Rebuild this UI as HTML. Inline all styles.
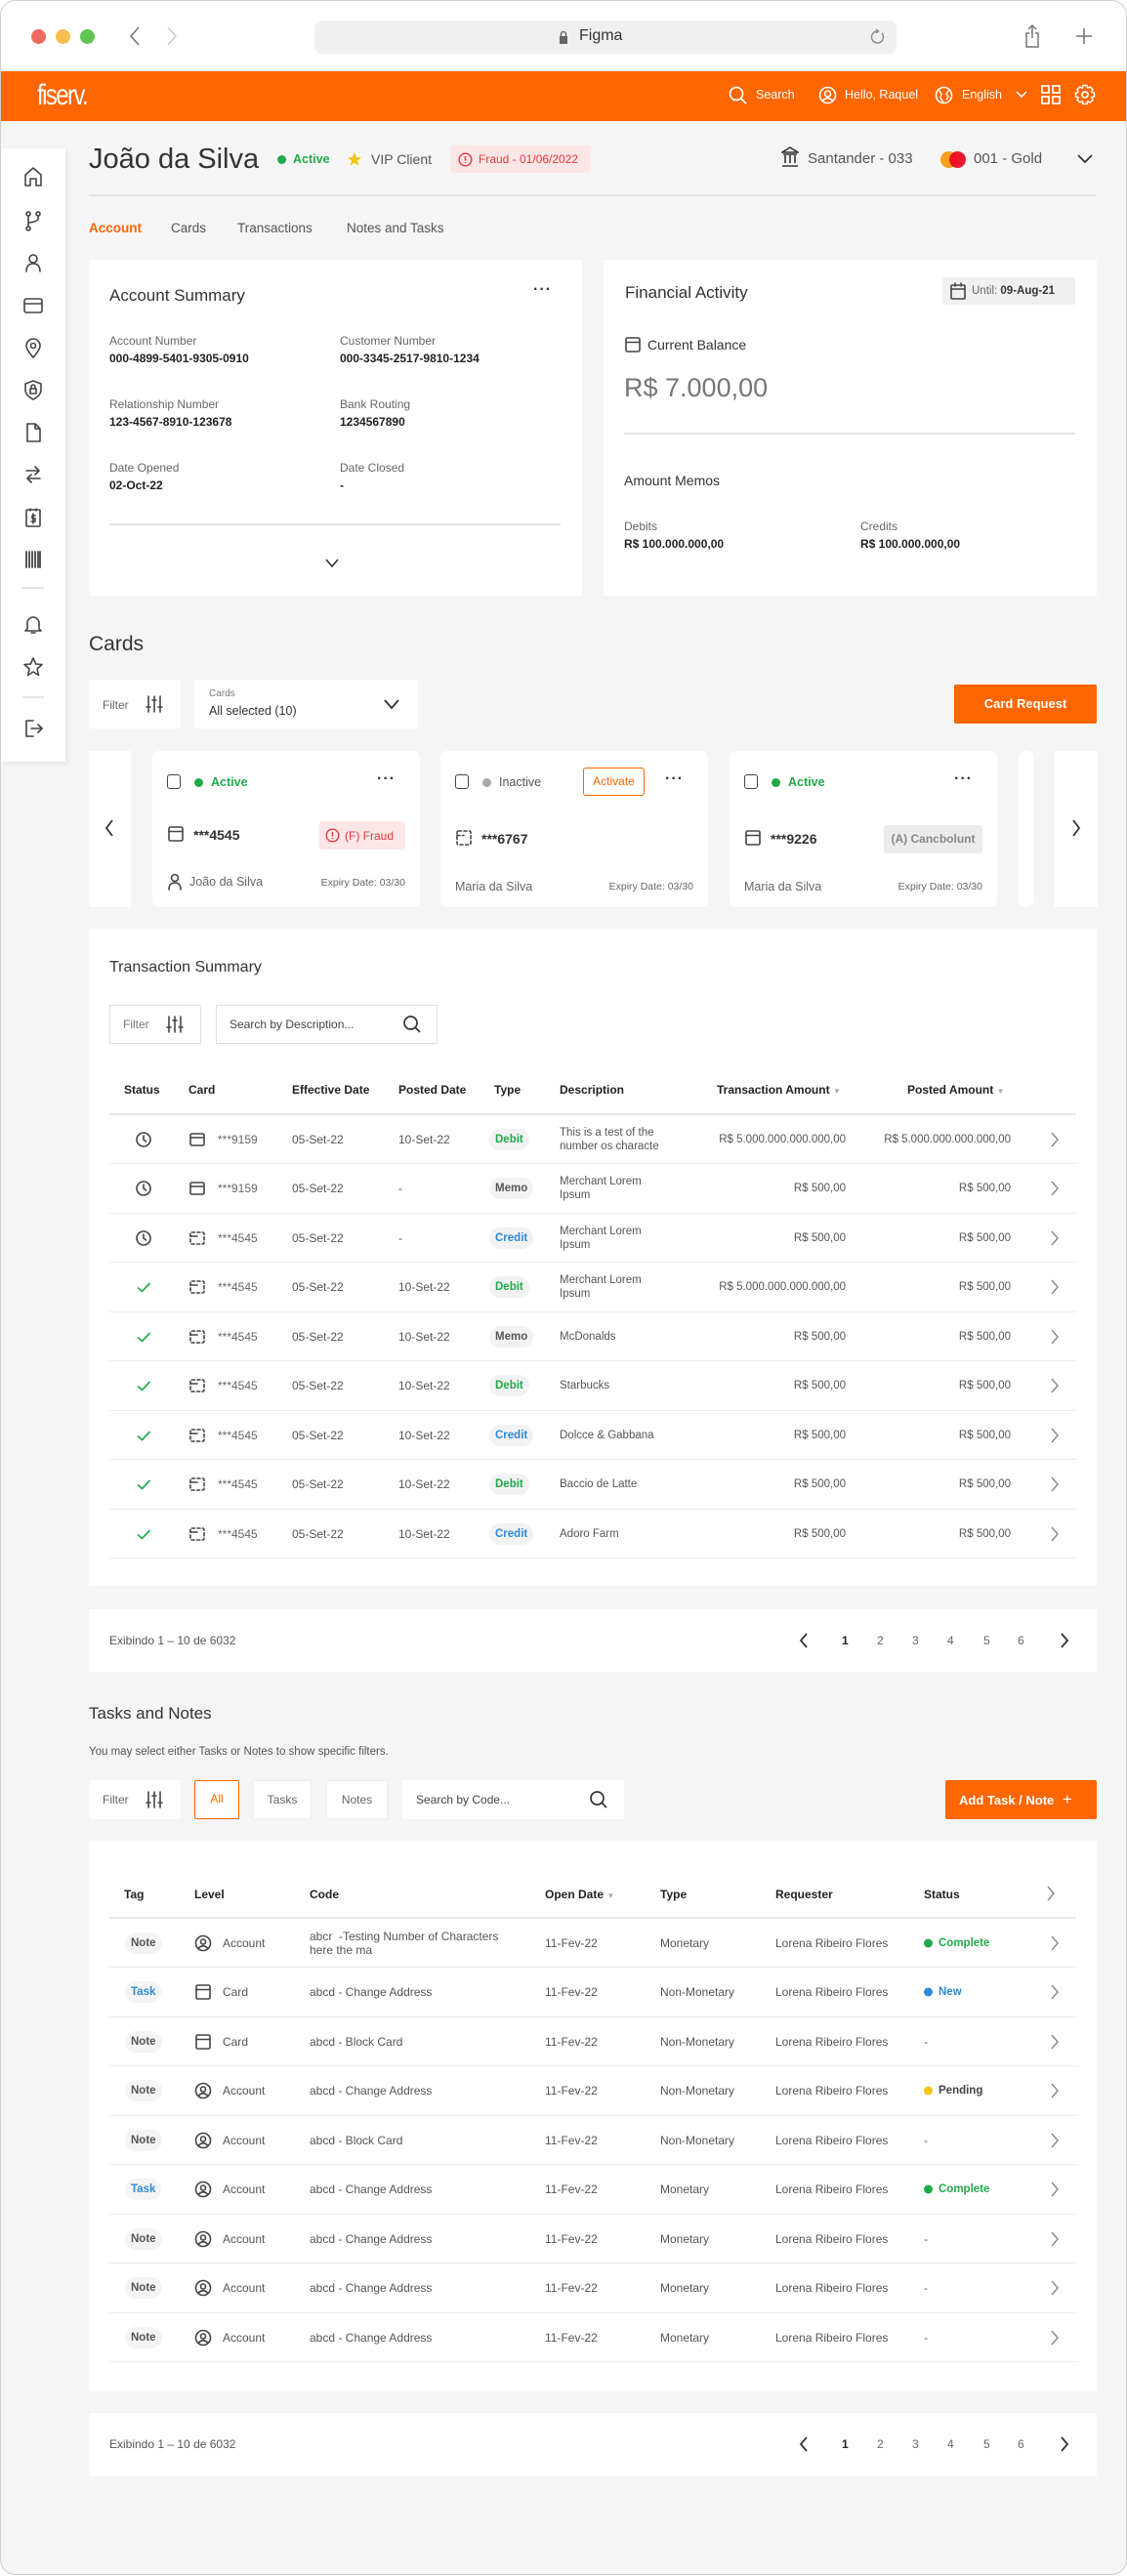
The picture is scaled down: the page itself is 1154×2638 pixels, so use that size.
<!DOCTYPE html>
<html><head><meta charset="utf-8">
<style>
*{box-sizing:border-box;margin:0;padding:0}
body{width:1154px;height:2638px;background:#fff;font-family:"Liberation Sans",Arial,sans-serif;color:#333;position:relative;overflow:hidden}
.a{position:absolute}
.win{position:absolute;left:0;top:0;width:1154px;height:2637px;border:1.5px solid #d0d0d0;border-radius:16px;overflow:hidden;background:#f5f5f5}
.chrome{position:absolute;left:0;top:0;width:1154px;height:72px;background:#fff;border-bottom:1px solid #ddd}
.hdr{position:absolute;left:0;top:72px;width:1154px;height:51px;background:#ff6600}
.panel{position:absolute;background:#fff}
.lbl{font-size:12px;color:#666}
.val{font-size:12px;color:#222;font-weight:bold}
.t{font-size:12px;color:#555;white-space:nowrap}
.h{font-size:12px;color:#222;font-weight:bold;white-space:nowrap}
.row{position:absolute;left:21px;width:990px;height:50px;border-bottom:1.5px solid #ececec}
.row>*{position:absolute;top:50%;transform:translateY(-50%)}
.bd{font-size:11.5px;font-weight:bold;padding:5px 6px;border-radius:12px;background:#f2f2f2}
.g{color:#23a94b}.bl{color:#2e8ad8}.gr{color:#555}
.box{position:absolute;background:#fff;border:1.5px solid #e0e0e0}
svg{display:block}
.ic{stroke:#444;fill:none;stroke-width:1.6;stroke-linecap:round;stroke-linejoin:round}
.card{position:absolute;top:768px;width:274px;height:160px;background:#fff;border-radius:7px}
.card>*{position:absolute}
.cb{width:14px;height:15px;border:1.6px solid #444;border-radius:3px}
.dot{width:9px;height:9px;border-radius:50%}
</style></head><body>
<div class="win">
<div class="chrome">
 <div class="a" style="left:31px;top:29px;width:15px;height:15px;border-radius:50%;background:#ec6a5e"></div>
 <div class="a" style="left:56px;top:29px;width:15px;height:15px;border-radius:50%;background:#f4bf4f"></div>
 <div class="a" style="left:81px;top:29px;width:15px;height:15px;border-radius:50%;background:#61c554"></div>
 <svg class="a" style="left:130px;top:25px" width="14" height="22"><path d="M11 2 L3 11 L11 20" stroke="#777" stroke-width="1.6" fill="none"/></svg>
 <svg class="a" style="left:168px;top:25px" width="14" height="22"><path d="M3 2 L11 11 L3 20" stroke="#ccc" stroke-width="1.6" fill="none"/></svg>
 <div class="a" style="left:321px;top:20px;width:596px;height:34px;border-radius:8px;background:#f0f0f0"></div>
 <svg class="a" style="left:571px;top:30px" width="10" height="15"><rect x="1" y="6" width="8" height="8" fill="#666"/><path d="M2.5 6 V4 a2.5 2.5 0 0 1 5 0 V6" stroke="#666" fill="none" stroke-width="1.4"/></svg>
 <div class="a" style="left:592px;top:27px;font-size:16px;color:#333">Figma</div>
 <svg class="a" style="left:889px;top:28px" width="16" height="18"><path d="M13 5 A6 6 0 1 1 8 3" stroke="#888" fill="none" stroke-width="1.4"/><path d="M7 1 L9.5 3 L7 5" stroke="#888" fill="none" stroke-width="1.4"/></svg>
 <svg class="a" style="left:1048px;top:23px" width="16" height="26"><path d="M8 2 V15 M4 6 L8 2 L12 6 M5 10 H2 V24 H14 V10 H11" stroke="#777" fill="none" stroke-width="1.5"/></svg>
 <svg class="a" style="left:1101px;top:28px" width="16" height="16"><path d="M8 0 V16 M0 8 H16" stroke="#777" stroke-width="1.6"/></svg>
</div>
<div class="hdr">
 <div class="a" style="left:37px;top:8px;font-size:30px;color:#fff;letter-spacing:-2px;transform:scaleX(.8);transform-origin:left;font-family:'Liberation Sans Narrow','Liberation Sans',sans-serif">fiserv.</div>
 <svg class="a" style="left:745px;top:15px" width="20" height="20"><circle cx="8" cy="8" r="6.5" stroke="#fff" fill="none" stroke-width="1.7"/><path d="M13 13 L18 18" stroke="#fff" stroke-width="1.7"/></svg>
 <div class="a" style="left:773px;top:17px;font-size:12.5px;color:#fff">Search</div>
 <svg class="a" style="left:837px;top:15px" width="19" height="19"><circle cx="9.5" cy="9.5" r="8" stroke="#fff" fill="none" stroke-width="1.6"/><circle cx="9.5" cy="8" r="3" stroke="#fff" fill="none" stroke-width="1.6"/><path d="M4.5 15 Q9.5 10 14.5 15" stroke="#fff" fill="none" stroke-width="1.6"/></svg>
 <div class="a" style="left:864px;top:17px;font-size:12.5px;color:#fff">Hello, Raquel</div>
 <svg class="a" style="left:956px;top:15px" width="19" height="19"><circle cx="9.5" cy="9.5" r="8" stroke="#fff" fill="none" stroke-width="1.6"/><path d="M4 4 L7 8 L6 12 L9 17 M15 4 L12 8 L14 11 L12 14" stroke="#fff" fill="none" stroke-width="1.4"/></svg>
 <div class="a" style="left:984px;top:17px;font-size:12.5px;color:#fff">English</div>
 <svg class="a" style="left:1039px;top:19px" width="12" height="10"><path d="M1 2 L6 7 L11 2" stroke="#fff" fill="none" stroke-width="1.5"/></svg>
 <svg class="a" style="left:1065px;top:14px" width="20" height="20"><g stroke="#fff" fill="none" stroke-width="1.7"><rect x="1" y="1" width="7" height="7"/><rect x="12" y="1" width="7" height="7"/><rect x="1" y="12" width="7" height="7"/><rect x="12" y="12" width="7" height="7"/></g></svg>
 <svg class="a" style="left:1099px;top:13px" width="22" height="22"><circle cx="11" cy="11" r="3" stroke="#fff" fill="none" stroke-width="1.7"/><path d="M9 1.5 H13 L13.7 4.3 L16.3 3 L19 5.7 L17.7 8.3 L20.5 9 V13 L17.7 13.7 L19 16.3 L16.3 19 L13.7 17.7 L13 20.5 H9 L8.3 17.7 L5.7 19 L3 16.3 L4.3 13.7 L1.5 13 V9 L4.3 8.3 L3 5.7 L5.7 3 L8.3 4.3 Z" stroke="#fff" fill="none" stroke-width="1.5" stroke-linejoin="round"/></svg>
</div>

<!-- sidebar -->
<div class="a" style="left:0;top:151px;width:66px;height:628px;background:#fff;box-shadow:2px 2px 6px rgba(0,0,0,.08)">
 <svg class="a ic" style="left:22px;top:18px" width="22" height="22" viewBox="0 0 22 22"><path d="M3 20 V9 L11 2 L19 9 V20 H14 V13 H8 V20 Z"/></svg>
 <svg class="a ic" style="left:22px;top:63px" width="22" height="22" viewBox="0 0 22 22"><circle cx="6" cy="4" r="2"/><circle cx="16" cy="4" r="2"/><circle cx="6" cy="19" r="2"/><path d="M6 6 V17 M16 6 V9 Q16 12 6 13"/></svg>
 <svg class="a ic" style="left:22px;top:106px" width="22" height="22" viewBox="0 0 22 22"><circle cx="11" cy="7" r="4"/><path d="M4 20 Q4 12 11 12 Q18 12 18 20"/></svg>
 <svg class="a ic" style="left:22px;top:150px" width="22" height="22" viewBox="0 0 22 22"><rect x="2" y="4" width="18" height="14" rx="2"/><path d="M2 9 H20"/></svg>
 <svg class="a ic" style="left:22px;top:193px" width="22" height="22" viewBox="0 0 22 22"><path d="M11 21 Q4 13 4 9 A7 7 0 0 1 18 9 Q18 13 11 21 Z"/><circle cx="11" cy="9" r="2.5"/></svg>
 <svg class="a ic" style="left:22px;top:236px" width="22" height="22" viewBox="0 0 22 22"><path d="M11 2 L19 5 V11 Q19 17 11 21 Q3 17 3 11 V5 Z"/><rect x="8" y="10" width="6" height="5"/><path d="M9 10 V8 a2 2 0 0 1 4 0 V10"/></svg>
 <svg class="a ic" style="left:22px;top:280px" width="22" height="22" viewBox="0 0 22 22"><path d="M5 2 H13 L18 7 V20 H5 Z M13 2 V7 H18"/></svg>
 <svg class="a ic" style="left:22px;top:323px" width="22" height="22" viewBox="0 0 22 22"><path d="M4 7 H17 M13 3 L17 7 L13 11 M18 15 H5 M9 11 L5 15 L9 19"/></svg>
 <svg class="a ic" style="left:22px;top:367px" width="22" height="22" viewBox="0 0 22 22"><rect x="4" y="3" width="14" height="17" rx="1"/><path d="M8 2 V4 M14 2 V4 M13 9 H10 V12 H13 V15 H9 M11 7 V17"/></svg>
 <svg class="a ic" style="left:22px;top:410px" width="22" height="22" viewBox="0 0 22 22"><path d="M4 3 V19 M7 3 V19 M10 3 V19 M13 3 V19 M16 3 V19 M18 3 V19" stroke-width="1.8"/></svg>
 <div class="a" style="left:22px;top:449px;width:22px;height:2px;background:#e5e5e5"></div>
 <svg class="a ic" style="left:22px;top:476px" width="22" height="22" viewBox="0 0 22 22"><path d="M5 16 V10 A6 6 0 0 1 17 10 V16 L19 18 H3 Z M9 20 H13"/></svg>
 <svg class="a ic" style="left:22px;top:520px" width="22" height="22" viewBox="0 0 22 22"><path d="M11 2 L13.7 8 L20 8.5 L15 13 L16.5 19.5 L11 16 L5.5 19.5 L7 13 L2 8.5 L8.3 8 Z"/></svg>
 <div class="a" style="left:22px;top:561px;width:22px;height:2px;background:#e5e5e5"></div>
 <svg class="a ic" style="left:22px;top:583px" width="22" height="22" viewBox="0 0 22 22"><path d="M11 3 H4 V19 H11 M9 11 H20 M16 7 L20 11 L16 15"/></svg>
</div>

<!-- name row -->
<div class="a" style="left:90px;top:146px;font-size:29px;color:#333">João da Silva</div>
<div class="a dot" style="left:283px;top:158px;background:#23a94b"></div>
<div class="a" style="left:299px;top:155px;font-size:12.5px;color:#23a94b;font-weight:bold">Active</div>
<svg class="a" style="left:354px;top:154px" width="16" height="16"><path d="M8 1 L10 6 L15 6.3 L11 9.5 L12.4 14.6 L8 11.7 L3.6 14.6 L5 9.5 L1 6.3 L6 6 Z" fill="#f5c518"/></svg>
<div class="a" style="left:379px;top:154px;font-size:14px;color:#555">VIP Client</div>
<div class="a" style="left:460px;top:148px;width:144px;height:28px;background:#fde6e6;border-radius:3px"></div>
<svg class="a" style="left:468px;top:155px" width="15" height="15"><circle cx="7.5" cy="7.5" r="6.3" stroke="#e5393d" fill="none" stroke-width="1.4"/><path d="M7.5 4 V8.5 M7.5 10 V11" stroke="#e5393d" stroke-width="1.5"/></svg>
<div class="a" style="left:489px;top:155px;font-size:12px;color:#e5393d">Fraud - 01/06/2022</div>
<svg class="a" style="left:799px;top:149px" width="18" height="22"><path d="M9 1 L17 6 H1 Z M2 8 H16 M4 9 V17 M9 9 V17 M14 9 V17 M1 20 H17" stroke="#333" fill="none" stroke-width="1.6"/></svg>
<div class="a" style="left:826px;top:153px;font-size:15px;color:#555">Santander - 033</div>
<div class="a" style="left:962px;top:154px;width:17px;height:17px;border-radius:50%;background:#f79e1b"></div>
<div class="a" style="left:971px;top:154px;width:17px;height:17px;border-radius:50%;background:#eb001b;opacity:.9"></div>
<div class="a" style="left:996px;top:153px;font-size:15px;color:#555">001 - Gold</div>
<svg class="a" style="left:1102px;top:156px" width="16" height="12"><path d="M1 2 L8 9 L15 2" stroke="#333" fill="none" stroke-width="1.8"/></svg>
<div class="a" style="left:90px;top:198px;width:1032px;height:1.5px;background:#e4e4e4"></div>

<!-- tabs -->
<div class="a" style="left:90px;top:225px;font-size:13.5px;color:#ff6600;font-weight:bold">Account</div>
<div class="a" style="left:174px;top:225px;font-size:13.5px;color:#555">Cards</div>
<div class="a" style="left:242px;top:225px;font-size:13.5px;color:#555">Transactions</div>
<div class="a" style="left:354px;top:225px;font-size:13.5px;color:#555">Notes and Tasks</div>

<!-- Account summary -->
<div class="panel" style="left:90px;top:265px;width:505px;height:344px">
 <div class="a" style="left:21px;top:27px;font-size:17px;color:#333">Account Summary</div>
 <div class="a" style="left:455px;top:22px;font-size:16px;font-weight:bold;color:#333;letter-spacing:1px">···</div>
 <div class="a lbl" style="left:21px;top:76px">Account Number</div><div class="a val" style="left:21px;top:94px">000-4899-5401-9305-0910</div>
 <div class="a lbl" style="left:257px;top:76px">Customer Number</div><div class="a val" style="left:257px;top:94px">000-3345-2517-9810-1234</div>
 <div class="a lbl" style="left:21px;top:141px">Relationship Number</div><div class="a val" style="left:21px;top:159px">123-4567-8910-123678</div>
 <div class="a lbl" style="left:257px;top:141px">Bank Routing</div><div class="a val" style="left:257px;top:159px">1234567890</div>
 <div class="a lbl" style="left:21px;top:206px">Date Opened</div><div class="a val" style="left:21px;top:224px">02-Oct-22</div>
 <div class="a lbl" style="left:257px;top:206px">Date Closed</div><div class="a val" style="left:257px;top:224px">-</div>
 <div class="a" style="left:21px;top:270px;width:462px;height:1.5px;background:#e4e4e4"></div>
 <svg class="a" style="left:242px;top:306px" width="14" height="10"><path d="M1 1 L7 8 L13 1" stroke="#333" fill="none" stroke-width="1.6"/></svg>
</div>

<!-- Financial activity -->
<div class="panel" style="left:617px;top:265px;width:505px;height:344px">
 <div class="a" style="left:22px;top:24px;font-size:17px;color:#333">Financial Activity</div>
 <div class="a" style="left:347px;top:18px;width:136px;height:28px;background:#f0f0f0;border-radius:2px"></div>
 <svg class="a ic" style="left:354px;top:22px" width="18" height="20" viewBox="0 0 18 20"><rect x="2" y="4" width="14" height="14" rx="1"/><path d="M2 8 H16 M6 2 V5 M12 2 V5"/></svg>
 <div class="a" style="left:377px;top:26px;font-size:11.5px;color:#666">Until: <b style="color:#333">09-Aug-21</b></div>
 <svg class="a ic" style="left:21px;top:78px" width="18" height="18" viewBox="0 0 18 18"><rect x="2" y="2" width="14" height="14" rx="1.5"/><path d="M2 6.5 H16"/></svg>
 <div class="a" style="left:45px;top:79px;font-size:14px;color:#333">Current Balance</div>
 <div class="a" style="left:21px;top:116px;font-size:27px;color:#777">R$ 7.000,00</div>
 <div class="a" style="left:21px;top:177px;width:462px;height:1.5px;background:#e4e4e4"></div>
 <div class="a" style="left:21px;top:218px;font-size:14px;color:#333">Amount Memos</div>
 <div class="a lbl" style="left:21px;top:266px">Debits</div><div class="a val" style="left:21px;top:284px">R$ 100.000.000,00</div>
 <div class="a lbl" style="left:263px;top:266px">Credits</div><div class="a val" style="left:263px;top:284px">R$ 100.000.000,00</div>
</div>

<!-- Cards -->
<div class="a" style="left:90px;top:647px;font-size:21px;color:#333">Cards</div>
<div class="panel" style="left:90px;top:695px;width:94px;height:50px">
 <div class="a" style="left:14px;top:19px;font-size:12px;color:#666">Filter</div>
 <svg class="a ic" style="left:57px;top:15px" width="20" height="20" viewBox="0 0 20 20"><path d="M4 2 V18 M10 2 V18 M16 2 V18 M2 13 H6 M8 6 H12 M14 13 H18"/></svg>
</div>
<div class="panel" style="left:198px;top:695px;width:228px;height:50px">
 <div class="a" style="left:15px;top:9px;font-size:10px;color:#777">Cards</div>
 <div class="a" style="left:15px;top:25px;font-size:12.5px;color:#333">All selected (10)</div>
 <svg class="a" style="left:194px;top:20px" width="16" height="11"><path d="M1 1 L8 9 L15 1" stroke="#333" fill="none" stroke-width="1.8"/></svg>
</div>
<div class="a" style="left:976px;top:700px;width:146px;height:40px;background:#ff6600;border-radius:2px;color:#fff;font-weight:bold;font-size:13px;text-align:center;line-height:40px">Card Request</div>

<div class="a" style="left:90px;top:768px;width:43px;height:160px;background:#fff"></div>
<svg class="a" style="left:106px;top:837px" width="10" height="20"><path d="M8 2 L2 10 L8 18" stroke="#333" fill="none" stroke-width="1.8"/></svg>
<div class="a" style="left:1042px;top:768px;width:15px;height:160px;background:#fff;border-radius:7px"></div>
<div class="a" style="left:1079px;top:768px;width:44px;height:160px;background:#fff"></div>
<svg class="a" style="left:1096px;top:837px" width="10" height="20"><path d="M2 2 L8 10 L2 18" stroke="#333" fill="none" stroke-width="1.8"/></svg>

<div class="card" style="left:155px">
 <div class="cb" style="left:15px;top:24px"></div>
 <div class="dot" style="left:43px;top:28px;background:#23a94b"></div>
 <div style="left:60px;top:25px;font-size:12.5px;color:#23a94b;font-weight:bold">Active</div>
 <div style="left:230px;top:20px;font-size:16px;font-weight:bold;letter-spacing:1px">···</div>
 <svg class="ic" style="left:15px;top:76px" width="18" height="18" viewBox="0 0 18 18"><rect x="2" y="2" width="14" height="14" rx="1.5"/><path d="M2 6.5 H16"/></svg>
 <div style="left:42px;top:78px;font-size:14px;font-weight:bold;color:#333">***4545</div>
 <div style="left:171px;top:72px;width:88px;height:29px;background:#fde6e6;border-radius:3px"></div>
 <svg style="left:177px;top:79px" width="15" height="15"><circle cx="7.5" cy="7.5" r="6.3" stroke="#e5393d" fill="none" stroke-width="1.4"/><path d="M7.5 4 V8.5 M7.5 10 V11" stroke="#e5393d" stroke-width="1.5"/></svg>
 <div style="left:197px;top:80px;font-size:12px;color:#e5393d">(F) Fraud</div>
 <svg class="ic" style="left:15px;top:125px" width="16" height="18" viewBox="0 0 16 18"><circle cx="8" cy="5" r="3.5"/><path d="M2 17 Q2 10 8 10 Q14 10 14 17"/></svg>
 <div style="left:38px;top:127px;font-size:12.5px;color:#666">João da Silva</div>
 <div style="right:15px;top:129px;font-size:10.5px;color:#666">Expiry Date: 03/30</div>
</div>
<div class="card" style="left:450px">
 <div class="cb" style="left:15px;top:24px"></div>
 <div class="dot" style="left:43px;top:28px;background:#aaa"></div>
 <div style="left:60px;top:25px;font-size:12.5px;color:#555">Inactive</div>
 <div style="left:146px;top:17px;width:63px;height:29px;border:1.5px solid #ff6600;border-radius:3px;color:#ff6600;font-size:12px;text-align:center;line-height:26px">Activate</div>
 <div style="left:230px;top:20px;font-size:16px;font-weight:bold;letter-spacing:1px">···</div>
 <svg class="ic" style="left:15px;top:80px" width="18" height="18" viewBox="0 0 18 18"><rect x="2" y="2" width="14" height="14" rx="1.5" stroke-dasharray="3 2.5"/><path d="M2 6.5 H9" stroke-dasharray="3 2.5"/></svg>
 <div style="left:42px;top:82px;font-size:14px;font-weight:bold;color:#333">***6767</div>
 <div style="left:15px;top:132px;font-size:12.5px;color:#666">Maria da Silva</div>
 <div style="right:15px;top:133px;font-size:10.5px;color:#666">Expiry Date: 03/30</div>
</div>
<div class="card" style="left:746px">
 <div class="cb" style="left:15px;top:24px"></div>
 <div class="dot" style="left:43px;top:28px;background:#23a94b"></div>
 <div style="left:60px;top:25px;font-size:12.5px;color:#23a94b;font-weight:bold">Active</div>
 <div style="left:230px;top:20px;font-size:16px;font-weight:bold;letter-spacing:1px">···</div>
 <svg class="ic" style="left:15px;top:80px" width="18" height="18" viewBox="0 0 18 18"><rect x="2" y="2" width="14" height="14" rx="1.5"/><path d="M2 6.5 H16"/></svg>
 <div style="left:42px;top:82px;font-size:14px;font-weight:bold;color:#333">***9226</div>
 <div style="left:158px;top:76px;width:101px;height:29px;background:#ececec;border-radius:3px;color:#888;font-size:12px;text-align:center;line-height:29px;font-weight:bold">(A) Cancbolunt</div>
 <div style="left:15px;top:132px;font-size:12.5px;color:#666">Maria da Silva</div>
 <div style="right:15px;top:133px;font-size:10.5px;color:#666">Expiry Date: 03/30</div>
</div>

<!-- Transaction summary -->
<div class="panel" style="left:90px;top:950px;width:1032px;height:673px">
 <div class="a" style="left:21px;top:31px;font-size:16px;color:#333">Transaction Summary</div>
 <div class="box" style="left:21px;top:78px;width:94px;height:40px">
  <div class="a" style="left:13px;top:12px;font-size:12px;color:#777">Filter</div>
  <svg class="a ic" style="left:56px;top:9px" width="20" height="20" viewBox="0 0 20 20"><path d="M4 2 V18 M10 2 V18 M16 2 V18 M2 13 H6 M8 6 H12 M14 13 H18"/></svg>
 </div>
 <div class="box" style="left:130px;top:78px;width:227px;height:40px">
  <div class="a" style="left:13px;top:12px;font-size:12px;color:#444">Search by Description...</div>
  <svg class="a" style="left:190px;top:9px" width="20" height="20"><circle cx="8.5" cy="8.5" r="6.5" stroke="#333" fill="none" stroke-width="1.7"/><path d="M13 13 L18 18" stroke="#333" stroke-width="1.7"/></svg>
 </div>
 <div class="a h" style="left:36px;top:158px">Status</div>
 <div class="a h" style="left:102px;top:158px">Card</div>
 <div class="a h" style="left:208px;top:158px">Effective Date</div>
 <div class="a h" style="left:317px;top:158px">Posted Date</div>
 <div class="a h" style="left:415px;top:158px">Type</div>
 <div class="a h" style="left:482px;top:158px">Description</div>
 <div class="a h" style="left:643px;top:158px">Transaction Amount <span style="color:#aaa;font-size:8px">▼</span></div>
 <div class="a h" style="left:838px;top:158px">Posted Amount <span style="color:#aaa;font-size:8px">▼</span></div>
 <div class="a" style="left:21px;top:189px;width:990px;height:1.5px;background:#e8e8e8"></div>
 <div id="tx" class="a" style="left:0;top:191px;width:1032px;height:460px"></div>
</div>

<!-- pagination 1 -->
<div class="panel" style="left:90px;top:1647px;width:1032px;height:64px">
 <div class="a" style="left:21px;top:25px;font-size:12px;color:#555">Exibindo 1 – 10 de 6032</div>
 <svg class="a" style="left:727px;top:23px" width="10" height="18"><path d="M8 2 L2 9 L8 16" stroke="#333" fill="none" stroke-width="1.8"/></svg>
 <div class="a" style="left:771px;top:25px;font-size:12px;color:#222;font-weight:bold">1</div>
 <div class="a" style="left:807px;top:25px;font-size:12px;color:#666">2</div>
 <div class="a" style="left:843px;top:25px;font-size:12px;color:#666">3</div>
 <div class="a" style="left:879px;top:25px;font-size:12px;color:#666">4</div>
 <div class="a" style="left:916px;top:25px;font-size:12px;color:#666">5</div>
 <div class="a" style="left:951px;top:25px;font-size:12px;color:#666">6</div>
 <svg class="a" style="left:994px;top:23px" width="10" height="18"><path d="M2 2 L8 9 L2 16" stroke="#333" fill="none" stroke-width="1.8"/></svg>
</div>

<!-- Tasks and notes -->
<div class="a" style="left:90px;top:1744px;font-size:17px;color:#333">Tasks and Notes</div>
<div class="a" style="left:90px;top:1787px;font-size:11.5px;color:#555">You may select either Tasks or Notes to show specific filters.</div>
<div class="panel" style="left:90px;top:1822px;width:94px;height:40px">
 <div class="a" style="left:14px;top:13px;font-size:12px;color:#666">Filter</div>
 <svg class="a ic" style="left:57px;top:10px" width="20" height="20" viewBox="0 0 20 20"><path d="M4 2 V18 M10 2 V18 M16 2 V18 M2 13 H6 M8 6 H12 M14 13 H18"/></svg>
</div>
<div class="a" style="left:198px;top:1822px;width:46px;height:40px;background:#fff;border:1.5px solid #ff6600;border-radius:2px;color:#ff6600;font-size:12px;text-align:center;line-height:37px">All</div>
<div class="a" style="left:258px;top:1822px;width:60px;height:40px;background:#fff;border:1px solid #eee;color:#666;font-size:12px;text-align:center;line-height:38px">Tasks</div>
<div class="a" style="left:333px;top:1822px;width:63px;height:40px;background:#fff;border:1px solid #eee;color:#666;font-size:12px;text-align:center;line-height:38px">Notes</div>
<div class="panel" style="left:411px;top:1822px;width:227px;height:40px">
 <div class="a" style="left:14px;top:13px;font-size:12px;color:#444">Search by Code...</div>
 <svg class="a" style="left:191px;top:10px" width="20" height="20"><circle cx="8.5" cy="8.5" r="6.5" stroke="#333" fill="none" stroke-width="1.7"/><path d="M13 13 L18 18" stroke="#333" stroke-width="1.7"/></svg>
</div>
<div class="a" style="left:967px;top:1822px;width:155px;height:40px;background:#ff6600;border-radius:2px;color:#fff;font-weight:bold;font-size:13px;line-height:40px;padding-left:14px">Add Task / Note <span style="font-weight:normal;font-size:17px;margin-left:5px">+</span></div>

<div class="panel" style="left:90px;top:1884px;width:1032px;height:564px">
 <div class="a h" style="left:36px;top:48px">Tag</div>
 <div class="a h" style="left:108px;top:48px">Level</div>
 <div class="a h" style="left:226px;top:48px">Code</div>
 <div class="a h" style="left:467px;top:48px">Open Date <span style="color:#aaa;font-size:8px">▼</span></div>
 <div class="a h" style="left:585px;top:48px">Type</div>
 <div class="a h" style="left:703px;top:48px">Requester</div>
 <div class="a h" style="left:855px;top:48px">Status</div>
 <svg class="a" style="left:980px;top:45px" width="10" height="18"><path d="M2 2 L8 9 L2 16" stroke="#888" fill="none" stroke-width="1.4"/></svg>
 <div class="a" style="left:21px;top:78px;width:990px;height:1.5px;background:#e8e8e8"></div>
 <div id="tk" class="a" style="left:0;top:80px;width:1032px;height:460px"></div>
</div>

<!-- pagination 2 -->
<div class="panel" style="left:90px;top:2470px;width:1032px;height:65px">
 <div class="a" style="left:21px;top:25px;font-size:12px;color:#555">Exibindo 1 – 10 de 6032</div>
 <svg class="a" style="left:727px;top:23px" width="10" height="18"><path d="M8 2 L2 9 L8 16" stroke="#333" fill="none" stroke-width="1.8"/></svg>
 <div class="a" style="left:771px;top:25px;font-size:12px;color:#222;font-weight:bold">1</div>
 <div class="a" style="left:807px;top:25px;font-size:12px;color:#666">2</div>
 <div class="a" style="left:843px;top:25px;font-size:12px;color:#666">3</div>
 <div class="a" style="left:879px;top:25px;font-size:12px;color:#666">4</div>
 <div class="a" style="left:916px;top:25px;font-size:12px;color:#666">5</div>
 <div class="a" style="left:951px;top:25px;font-size:12px;color:#666">6</div>
 <svg class="a" style="left:994px;top:23px" width="10" height="18"><path d="M2 2 L8 9 L2 16" stroke="#333" fill="none" stroke-width="1.8"/></svg>
</div>
</div>

<!-- transaction rows -->
<div style="display:none"></div>
<style>
#tx .row:nth-child(1){top:0}#tx .row:nth-child(2){top:50.5px}#tx .row:nth-child(3){top:101px}#tx .row:nth-child(4){top:151.5px}#tx .row:nth-child(5){top:202px}#tx .row:nth-child(6){top:252.5px}#tx .row:nth-child(7){top:303px}#tx .row:nth-child(8){top:353.5px}#tx .row:nth-child(9){top:404px}
#tk .row:nth-child(1){top:0}#tk .row:nth-child(2){top:50.5px}#tk .row:nth-child(3){top:101px}#tk .row:nth-child(4){top:151.5px}#tk .row:nth-child(5){top:202px}#tk .row:nth-child(6){top:252.5px}#tk .row:nth-child(7){top:303px}#tk .row:nth-child(8){top:353.5px}#tk .row:nth-child(9){top:404px}
</style>
<template id="x"></template>
<script>
var clock='<svg class="ic" width="18" height="18" viewBox="0 0 18 18" style="left:26px"><circle cx="9" cy="9" r="7"/><path d="M9 5 V9 L11.5 11"/></svg>';
var chk='<svg width="18" height="18" viewBox="0 0 18 18" style="left:26px"><path d="M3 9.5 L7.5 13.5 L15.5 5" stroke="#23a94b" fill="none" stroke-width="1.7"/></svg>';
var cs='<svg class="ic" width="18" height="18" viewBox="0 0 18 18" style="left:81px"><rect x="2" y="3" width="14" height="12" rx="1.5"/><path d="M2 7 H16"/></svg>';
var cd='<svg class="ic" width="18" height="18" viewBox="0 0 18 18" style="left:81px"><rect x="2" y="3" width="14" height="12" rx="1.5" stroke-dasharray="3 2.5"/><path d="M2 7 H9"/></svg>';
var chev='<svg width="10" height="18" style="left:963px"><path d="M2 2 L8 9 L2 16" stroke="#888" fill="none" stroke-width="1.4"/></svg>';
function bd(t){var c=t=='Debit'?'g':t=='Credit'?'bl':'gr';return '<div class="bd '+c+'" style="left:389px">'+t+'</div>'}
var big='R$ 5.000.000.000.000,00',s='R$ 500,00';
var T=[[clock,cs,'***9159','10-Set-22','Debit','This is a test of the<br>number os characte',big,big],
[clock,cs,'***9159','-','Memo','Merchant Lorem<br>Ipsum',s,s],
[clock,cd,'***4545','-','Credit','Merchant Lorem<br>Ipsum',s,s],
[chk,cd,'***4545','10-Set-22','Debit','Merchant Lorem<br>Ipsum',big,s],
[chk,cd,'***4545','10-Set-22','Memo','McDonalds',s,s],
[chk,cd,'***4545','10-Set-22','Debit','Starbucks',s,s],
[chk,cd,'***4545','10-Set-22','Credit','Dolcce &amp; Gabbana',s,s],
[chk,cd,'***4545','10-Set-22','Debit','Baccio de Latte',s,s],
[chk,cd,'***4545','10-Set-22','Credit','Adoro Farm',s,s]];
var h='';T.forEach(function(r){h+='<div class="row">'+r[0]+r[1]+'<div class="t" style="left:111px;color:#666">'+r[2]+'</div><div class="t" style="left:187px">05-Set-22</div><div class="t" style="left:296px">'+r[3]+'</div>'+bd(r[4])+'<div class="t" style="left:461px;font-size:11.5px;line-height:14px">'+r[5]+'</div><div class="t" style="right:236px;font-size:11.5px">'+r[6]+'</div><div class="t" style="right:67px;font-size:11.5px">'+r[7]+'</div>'+chev+'</div>'});
document.getElementById('tx').innerHTML=h;
var acc='<svg class="ic" width="18" height="18" viewBox="0 0 18 18" style="left:87px"><circle cx="9" cy="9" r="7.5"/><circle cx="9" cy="7.5" r="2.5"/><path d="M4.5 14 Q9 9.5 13.5 14"/></svg><div class="t" style="left:116px">Account</div>';
var crd='<svg class="ic" width="18" height="18" viewBox="0 0 18 18" style="left:87px"><rect x="2" y="2" width="14" height="14" rx="1.5"/><path d="M2 6.5 H16"/></svg><div class="t" style="left:116px">Card</div>';
function tg(t){return '<div class="bd '+(t=='Task'?'bl':'gr')+'" style="left:16px;background:#f4f4f4">'+t+'</div>'}
function st(s){if(s=='-')return '<div class="t" style="left:834px">-</div>';var c=s=='Complete'?'#23a94b':s=='New'?'#2e8ad8':'#f5c518';var tc=s=='Pending'?'#444':c;return '<div class="dot" style="left:834px;background:'+c+'"></div><div class="t" style="left:849px;color:'+tc+';font-weight:bold;font-size:11.5px">'+s+'</div>'}
var K=[['Note',acc,'abcr &nbsp;-Testing Number of Characters<br>here the ma','Monetary','Complete'],
['Task',crd,'abcd - Change Address','Non-Monetary','New'],
['Note',crd,'abcd - Block Card','Non-Monetary','-'],
['Note',acc,'abcd - Change Address','Non-Monetary','Pending'],
['Note',acc,'abcd - Block Card','Non-Monetary','-'],
['Task',acc,'abcd - Change Address','Monetary','Complete'],
['Note',acc,'abcd - Change Address','Monetary','-'],
['Note',acc,'abcd - Change Address','Monetary','-'],
['Note',acc,'abcd - Change Address','Monetary','-']];
h='';K.forEach(function(r){h+='<div class="row">'+tg(r[0])+r[1]+'<div class="t" style="left:205px;line-height:14px">'+r[2]+'</div><div class="t" style="left:446px">11-Fev-22</div><div class="t" style="left:564px">'+r[3]+'</div><div class="t" style="left:682px">Lorena Ribeiro Flores</div>'+st(r[4])+chev+'</div>'});
document.getElementById('tk').innerHTML=h;
</script>
</body></html>
